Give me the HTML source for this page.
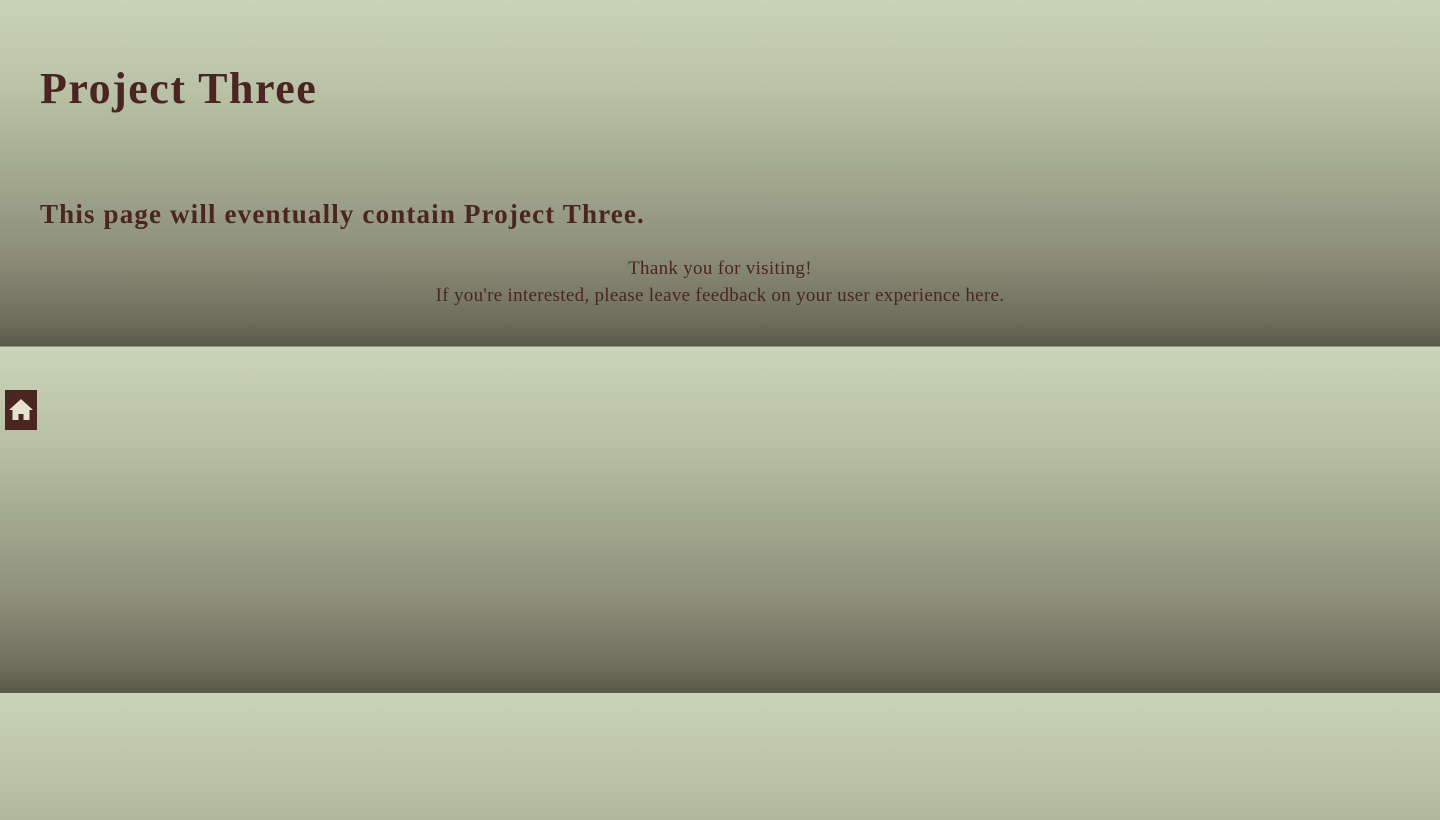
<!DOCTYPE html>
<html><head><style>
html,body{margin:0;height:820px;overflow:hidden}
body{background:repeating-linear-gradient(180deg,#cad4b8 0px,#b9c2a6 90px,#a4aa90 170px,#8e907b 250px,#6f6e5d 320px,#5a5848 346.5px);font-family:"Liberation Serif",serif;color:#4b2521;position:relative}
h1{position:absolute;left:40px;top:62px;margin:0;font-size:44px;line-height:54px;font-weight:bold;letter-spacing:1.5px}
h2{position:absolute;left:40px;top:196px;margin:0;font-size:27px;line-height:36px;font-weight:bold;letter-spacing:1.15px}
.p{position:absolute;left:0;width:1440px;top:255px;text-align:center;font-size:19px;line-height:27px;letter-spacing:0.3px}
.home{position:absolute;left:5px;top:390px;width:32px;height:40px;background:#4b2521}
</style></head><body>
<h1>Project Three</h1>
<h2>This page will eventually contain Project Three.</h2>
<div class="p">Thank you for visiting!<br>If you're interested, please leave feedback on your user experience here.</div>
<div class="home"><svg width="32" height="40" viewBox="0 0 32 40"><path d="M16 9 L4 20 H7.5 V30 H13.5 V24 H18.5 V30 H24.5 V20 H28 Z" fill="#e6e4cf"/></svg></div>
</body></html>
